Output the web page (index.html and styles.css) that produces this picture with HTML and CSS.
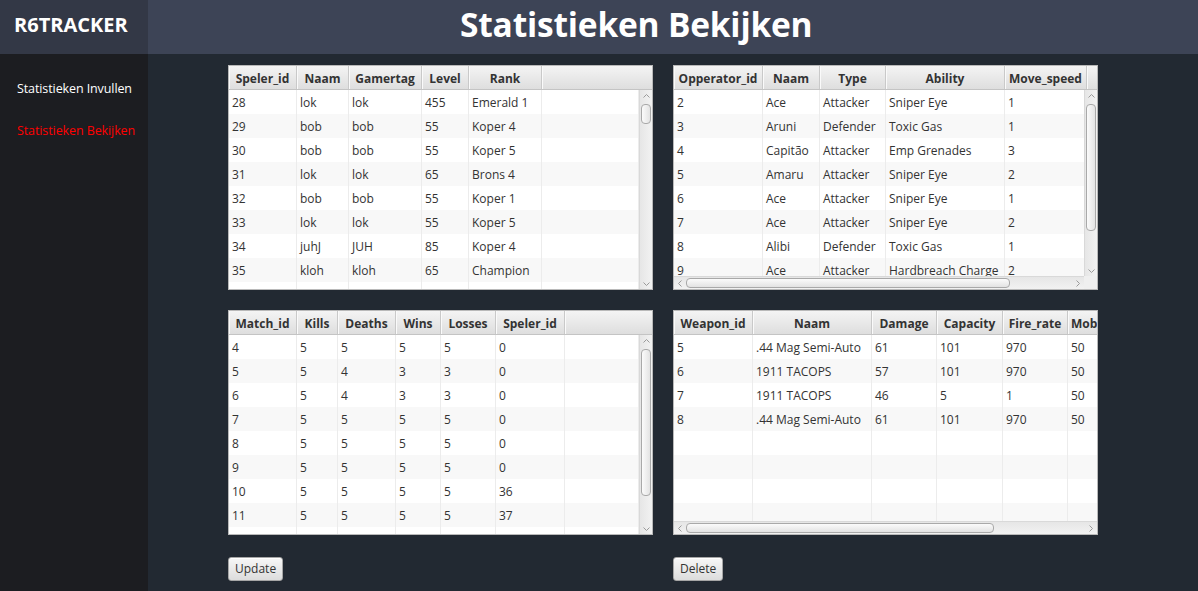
FILE: index.html
```html
<!DOCTYPE html>
<html lang="nl">
<head>
<meta charset="utf-8">
<title>R6Tracker - Statistieken Bekijken</title>
<link rel="stylesheet" href="styles.css">
</head>
<body>
<div class="app">
  <aside class="sidebar">
    <div class="brand">R6TRACKER</div>
    <nav class="nav">
      <a class="nav-item">Statistieken Invullen</a>
      <a class="nav-item active">Statistieken Bekijken</a>
    </nav>
  </aside>
  <main class="main">
    <header class="topbar"><h1 class="title">Statistieken Bekijken</h1></header>
    <section class="content">

      <!-- Spelers -->
      <div class="tv tv-players">
        <div class="tv-head">
          <div class="th">Speler_id</div><div class="th">Naam</div><div class="th">Gamertag</div><div class="th">Level</div><div class="th">Rank</div><div class="th"></div>
        </div>
        <div class="tv-mid">
          <div class="tv-rows">
            <div class="tr"><div class="td">28</div><div class="td">lok</div><div class="td">lok</div><div class="td">455</div><div class="td">Emerald 1</div><div class="td"></div></div>
            <div class="tr"><div class="td">29</div><div class="td">bob</div><div class="td">bob</div><div class="td">55</div><div class="td">Koper 4</div><div class="td"></div></div>
            <div class="tr"><div class="td">30</div><div class="td">bob</div><div class="td">bob</div><div class="td">55</div><div class="td">Koper 5</div><div class="td"></div></div>
            <div class="tr"><div class="td">31</div><div class="td">lok</div><div class="td">lok</div><div class="td">65</div><div class="td">Brons 4</div><div class="td"></div></div>
            <div class="tr"><div class="td">32</div><div class="td">bob</div><div class="td">bob</div><div class="td">55</div><div class="td">Koper 1</div><div class="td"></div></div>
            <div class="tr"><div class="td">33</div><div class="td">lok</div><div class="td">lok</div><div class="td">55</div><div class="td">Koper 5</div><div class="td"></div></div>
            <div class="tr"><div class="td">34</div><div class="td">juhJ</div><div class="td">JUH</div><div class="td">85</div><div class="td">Koper 4</div><div class="td"></div></div>
            <div class="tr"><div class="td">35</div><div class="td">kloh</div><div class="td">kloh</div><div class="td">65</div><div class="td">Champion</div><div class="td"></div></div>
            <div class="tr"><div class="td"></div><div class="td"></div><div class="td"></div><div class="td"></div><div class="td"></div><div class="td"></div></div>
          </div>
          <div class="vscroll">
            <svg class="arr" viewBox="0 0 7 4" width="7" height="4"><polyline points="0.5,3.5 3.5,0.5 6.5,3.5"/></svg>
            <div class="vtrack"><div class="vthumb thumb-players"></div></div>
            <svg class="arr" viewBox="0 0 7 4" width="7" height="4"><polyline points="0.5,0.5 3.5,3.5 6.5,0.5"/></svg>
          </div>
        </div>
      </div>

      <!-- Operators -->
      <div class="tv tv-ops">
        <div class="tv-head">
          <div class="th">Opperator_id</div><div class="th">Naam</div><div class="th">Type</div><div class="th">Ability</div><div class="th">Move_speed</div><div class="th"></div>
        </div>
        <div class="tv-mid">
          <div class="tv-rows">
            <div class="tr"><div class="td">2</div><div class="td">Ace</div><div class="td">Attacker</div><div class="td">Sniper Eye</div><div class="td">1</div></div>
            <div class="tr"><div class="td">3</div><div class="td">Aruni</div><div class="td">Defender</div><div class="td">Toxic Gas</div><div class="td">1</div></div>
            <div class="tr"><div class="td">4</div><div class="td">Capitão</div><div class="td">Attacker</div><div class="td">Emp Grenades</div><div class="td">3</div></div>
            <div class="tr"><div class="td">5</div><div class="td">Amaru</div><div class="td">Attacker</div><div class="td">Sniper Eye</div><div class="td">2</div></div>
            <div class="tr"><div class="td">6</div><div class="td">Ace</div><div class="td">Attacker</div><div class="td">Sniper Eye</div><div class="td">1</div></div>
            <div class="tr"><div class="td">7</div><div class="td">Ace</div><div class="td">Attacker</div><div class="td">Sniper Eye</div><div class="td">2</div></div>
            <div class="tr"><div class="td">8</div><div class="td">Alibi</div><div class="td">Defender</div><div class="td">Toxic Gas</div><div class="td">1</div></div>
            <div class="tr"><div class="td">9</div><div class="td">Ace</div><div class="td">Attacker</div><div class="td">Hardbreach Charge</div><div class="td">2</div></div>
          </div>
          <div class="vscroll">
            <svg class="arr" viewBox="0 0 7 4" width="7" height="4"><polyline points="0.5,3.5 3.5,0.5 6.5,3.5"/></svg>
            <div class="vtrack"><div class="vthumb thumb-ops"></div></div>
            <svg class="arr" viewBox="0 0 7 4" width="7" height="4"><polyline points="0.5,0.5 3.5,3.5 6.5,0.5"/></svg>
          </div>
        </div>
        <div class="tv-foot">
          <div class="hscroll">
            <svg class="arr" viewBox="0 0 4 7" width="4" height="7"><polyline points="3.5,0.5 0.5,3.5 3.5,6.5"/></svg>
            <div class="htrack"><div class="hthumb thumb-ops-h"></div></div>
            <svg class="arr" viewBox="0 0 4 7" width="4" height="7"><polyline points="0.5,0.5 3.5,3.5 0.5,6.5"/></svg>
          </div>
          <div class="corner"></div>
        </div>
      </div>

      <!-- Matches -->
      <div class="tv tv-matches">
        <div class="tv-head">
          <div class="th">Match_id</div><div class="th">Kills</div><div class="th">Deaths</div><div class="th">Wins</div><div class="th">Losses</div><div class="th">Speler_id</div><div class="th"></div>
        </div>
        <div class="tv-mid">
          <div class="tv-rows">
            <div class="tr"><div class="td">4</div><div class="td">5</div><div class="td">5</div><div class="td">5</div><div class="td">5</div><div class="td">0</div><div class="td"></div></div>
            <div class="tr"><div class="td">5</div><div class="td">5</div><div class="td">4</div><div class="td">3</div><div class="td">3</div><div class="td">0</div><div class="td"></div></div>
            <div class="tr"><div class="td">6</div><div class="td">5</div><div class="td">4</div><div class="td">3</div><div class="td">3</div><div class="td">0</div><div class="td"></div></div>
            <div class="tr"><div class="td">7</div><div class="td">5</div><div class="td">5</div><div class="td">5</div><div class="td">5</div><div class="td">0</div><div class="td"></div></div>
            <div class="tr"><div class="td">8</div><div class="td">5</div><div class="td">5</div><div class="td">5</div><div class="td">5</div><div class="td">0</div><div class="td"></div></div>
            <div class="tr"><div class="td">9</div><div class="td">5</div><div class="td">5</div><div class="td">5</div><div class="td">5</div><div class="td">0</div><div class="td"></div></div>
            <div class="tr"><div class="td">10</div><div class="td">5</div><div class="td">5</div><div class="td">5</div><div class="td">5</div><div class="td">36</div><div class="td"></div></div>
            <div class="tr"><div class="td">11</div><div class="td">5</div><div class="td">5</div><div class="td">5</div><div class="td">5</div><div class="td">37</div><div class="td"></div></div>
            <div class="tr"><div class="td"></div><div class="td"></div><div class="td"></div><div class="td"></div><div class="td"></div><div class="td"></div><div class="td"></div></div>
          </div>
          <div class="vscroll">
            <svg class="arr" viewBox="0 0 7 4" width="7" height="4"><polyline points="0.5,3.5 3.5,0.5 6.5,3.5"/></svg>
            <div class="vtrack"><div class="vthumb thumb-matches"></div></div>
            <svg class="arr" viewBox="0 0 7 4" width="7" height="4"><polyline points="0.5,0.5 3.5,3.5 6.5,0.5"/></svg>
          </div>
        </div>
      </div>

      <!-- Weapons -->
      <div class="tv tv-weapons">
        <div class="tv-head">
          <div class="th">Weapon_id</div><div class="th">Naam</div><div class="th">Damage</div><div class="th">Capacity</div><div class="th">Fire_rate</div><div class="th th-left">Mobility</div>
        </div>
        <div class="tv-mid">
          <div class="tv-rows">
            <div class="tr"><div class="td">5</div><div class="td">.44 Mag Semi-Auto</div><div class="td">61</div><div class="td">101</div><div class="td">970</div><div class="td">50</div></div>
            <div class="tr"><div class="td">6</div><div class="td">1911 TACOPS</div><div class="td">57</div><div class="td">101</div><div class="td">970</div><div class="td">50</div></div>
            <div class="tr"><div class="td">7</div><div class="td">1911 TACOPS</div><div class="td">46</div><div class="td">5</div><div class="td">1</div><div class="td">50</div></div>
            <div class="tr"><div class="td">8</div><div class="td">.44 Mag Semi-Auto</div><div class="td">61</div><div class="td">101</div><div class="td">970</div><div class="td">50</div></div>
            <div class="tr"><div class="td"></div><div class="td"></div><div class="td"></div><div class="td"></div><div class="td"></div><div class="td"></div></div>
            <div class="tr"><div class="td"></div><div class="td"></div><div class="td"></div><div class="td"></div><div class="td"></div><div class="td"></div></div>
            <div class="tr"><div class="td"></div><div class="td"></div><div class="td"></div><div class="td"></div><div class="td"></div><div class="td"></div></div>
            <div class="tr"><div class="td"></div><div class="td"></div><div class="td"></div><div class="td"></div><div class="td"></div><div class="td"></div></div>
          </div>
        </div>
        <div class="tv-foot">
          <div class="hscroll">
            <svg class="arr" viewBox="0 0 4 7" width="4" height="7"><polyline points="3.5,0.5 0.5,3.5 3.5,6.5"/></svg>
            <div class="htrack"><div class="hthumb thumb-weapons-h"></div></div>
            <svg class="arr" viewBox="0 0 4 7" width="4" height="7"><polyline points="0.5,0.5 3.5,3.5 0.5,6.5"/></svg>
          </div>
        </div>
      </div>

      <div class="actions"><button class="btn" type="button">Update</button></div>
      <div class="actions"><button class="btn" type="button">Delete</button></div>
    </section>
  </main>
</div>
</body>
</html>
```
FILE: styles.css
```css
* { box-sizing: border-box; }
html, body { margin: 0; padding: 0; }
body {
  width: 1198px;
  height: 591px;
  overflow: hidden;
  font-family: "Open Sans", "Noto Sans", "DejaVu Sans", sans-serif;
  background: #222932;
}
.app {
  display: grid;
  grid-template-columns: 148px 1fr;
  height: 591px;
}

/* sidebar */
.sidebar {
  background: #1c1d21;
  display: flex;
  flex-direction: column;
}
.brand {
  height: 54px;
  background: #333846;
  color: #ffffff;
  font-weight: 700;
  font-size: 20px;
  line-height: 50px;
  padding-left: 14px;
}
.nav {
  display: flex;
  flex-direction: column;
  padding: 24px 0 0 17px;
  gap: 20px;
}
.nav-item {
  color: #ffffff;
  font-size: 12.5px;
  line-height: 22px;
  letter-spacing: -0.1px;
}
.nav-item.active { color: #ff0000; }

/* main */
.main {
  display: flex;
  flex-direction: column;
}
.topbar {
  height: 54px;
  background: #3d4456;
  padding-left: 312px;
}
.title {
  margin: 0;
  color: #ffffff;
  font-size: 33.5px;
  font-weight: 700;
  line-height: 48px;
  letter-spacing: -0.2px;
}
.content {
  display: grid;
  grid-template-columns: 425px 425px;
  grid-template-rows: 225px 225px auto;
  column-gap: 20px;
  row-gap: 20px;
  padding: 11px 0 0 80px;
}

/* table view */
.tv {
  background: #ffffff;
  border: 1px solid #b9b9b9;
  display: flex;
  flex-direction: column;
  overflow: hidden;
  font-size: 12px;
  color: #333333;
}
.tv-head {
  display: grid;
  height: 24px;
  flex: none;
  background: linear-gradient(#f4f4f4, #dedede);
  border-bottom: 1px solid #c4c4c4;
}
.th {
  font-weight: 700;
  text-align: center;
  line-height: 25px;
  border-right: 1px solid #c9c9c9;
  box-shadow: inset 1px 0 0 #fafafa;
  white-space: nowrap;
  overflow: hidden;
}
.th:last-child { border-right: none; }
.th-left { text-align: left; padding-left: 3px; }
.tv-mid {
  flex: 1;
  display: flex;
  min-height: 0;
}
.tv-rows {
  flex: 1;
  min-width: 0;
  overflow: hidden;
}
.tr {
  display: grid;
  height: 24px;
  background: #ffffff;
}
.tr:nth-child(even) { background: #f8f8f8; }
.td {
  line-height: 25px;
  padding-left: 3px;
  border-right: 1px solid #ececec;
  white-space: nowrap;
  overflow: hidden;
}

.tv-players .tv-head, .tv-players .tr { grid-template-columns: 68px 52px 73px 47px 73px 1fr; }
.tv-ops .tv-head { grid-template-columns: 89px 57px 66px 119px 82px 1fr; }
.tv-ops .tr { grid-template-columns: 89px 57px 66px 119px 82px; }
.tv-matches .tv-head, .tv-matches .tr { grid-template-columns: 68px 41px 58px 45px 55px 69px 1fr; }
.tv-weapons .tv-head, .tv-weapons .tr { grid-template-columns: 79px 119px 65px 66px 65px 60px; }

/* scrollbars */
.vscroll {
  width: 13px;
  flex: none;
  background: linear-gradient(to right, #e6e6e6, #f2f2f2);
  border-left: 1px solid #d9d9d9;
  display: flex;
  flex-direction: column;
  align-items: center;
  padding: 4px 0 3px;
}
.arr { flex: none; }
.arr polyline { fill: none; stroke: #9a9a9a; stroke-width: 1; }
.vtrack {
  flex: 1;
  width: 100%;
  position: relative;
  margin: 3px 0;
}
.vthumb {
  position: absolute;
  left: 1px;
  right: 1px;
  border: 1px solid #a9a9a9;
  border-radius: 4px;
  background: linear-gradient(to right, #fbfbfb, #e3e3e3);
}
.thumb-players { top: 3px; height: 20px; }
.thumb-ops { top: 3px; height: 127px; }
.thumb-matches { top: 3px; height: 147px; }

.tv-foot {
  display: flex;
  height: 13px;
  flex: none;
}
.hscroll {
  flex: 1;
  background: linear-gradient(#e6e6e6, #f2f2f2);
  border-top: 1px solid #d9d9d9;
  display: flex;
  align-items: center;
  padding: 0 4px;
}
.corner {
  width: 13px;
  flex: none;
  background: #efefef;
}
.htrack {
  flex: 1;
  height: 100%;
  position: relative;
  margin: 0 4px;
}
.hthumb {
  position: absolute;
  top: 1px;
  bottom: 1px;
  left: 0;
  border: 1px solid #a9a9a9;
  border-radius: 4px;
  background: linear-gradient(#fbfbfb, #e3e3e3);
}
.thumb-ops-h { width: 324px; }
.thumb-weapons-h { width: 308px; }

/* buttons */
.actions {
  padding-top: 1px;
}
.btn {
  font-family: inherit;
  font-size: 12px;
  color: #333333;
  height: 24px;
  padding: 0 6px;
  border: 1px solid #a6a6a6;
  border-radius: 3px;
  background: linear-gradient(#f7f7f7, #dcdcdc);
  box-shadow: inset 0 1px 0 #ffffff;
}
```
